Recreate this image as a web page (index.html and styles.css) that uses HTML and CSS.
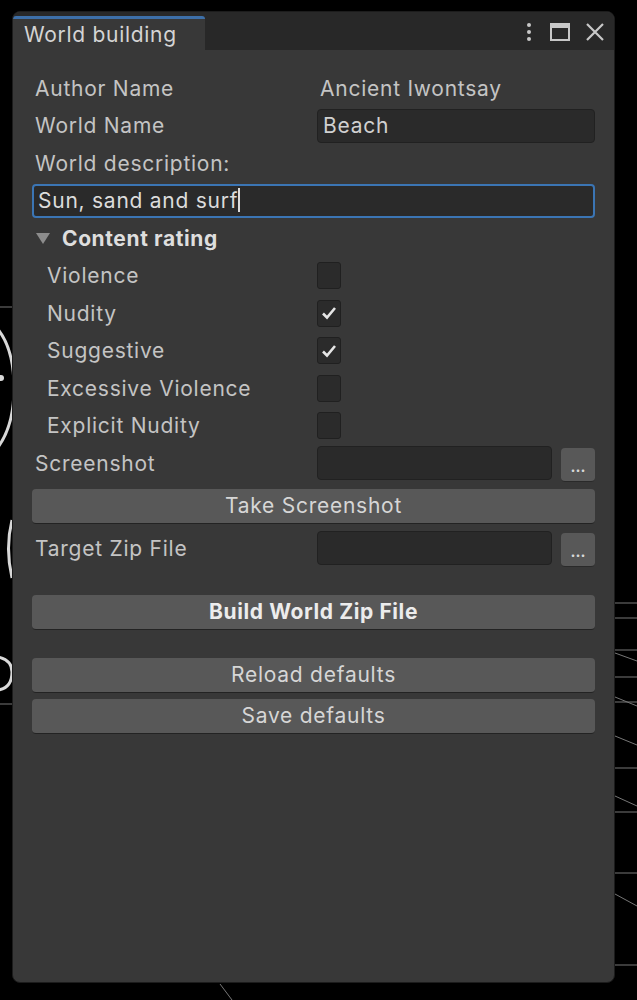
FILE: index.html
```html
<!DOCTYPE html>
<html>
<head>
<meta charset="utf-8">
<link rel="stylesheet" href="styles.css">
</head>
<body>
<svg class="scene" width="637" height="1000" viewBox="0 0 637 1000">
  <g fill="none" stroke="#d8d8d8" stroke-width="3">
    <path d="M-6 325 Q 14 345 14 388 Q 14 430 -6 452"/>
    <path d="M12 520 Q 5 548 12 578"/>
    <path d="M-2 657 Q 12 660 12 672 Q 12 688 -2 690"/>
  </g>
  <circle cx="1" cy="378" r="3" fill="#d8d8d8"/>
  <g stroke="#777" stroke-width="1">
    <line x1="0" y1="307" x2="13" y2="307"/>
    <line x1="0" y1="704" x2="13" y2="704"/>
    <line x1="615" y1="603" x2="637" y2="603"/>
    <line x1="615" y1="618" x2="637" y2="618"/>
    <line x1="615" y1="650" x2="637" y2="650"/>
    <line x1="615" y1="677" x2="637" y2="677"/>
    <line x1="615" y1="702" x2="637" y2="702"/>
    <line x1="615" y1="768" x2="637" y2="768"/>
    <line x1="615" y1="812" x2="637" y2="812"/>
    <line x1="615" y1="873" x2="637" y2="873"/>
    <line x1="615" y1="965" x2="637" y2="965"/>
    <line x1="615" y1="653" x2="637" y2="661"/>
    <line x1="615" y1="697" x2="637" y2="706"/>
    <line x1="615" y1="736" x2="637" y2="745"/>
    <line x1="615" y1="796" x2="637" y2="806"/>
    <line x1="615" y1="894" x2="637" y2="906"/>
    <line x1="220" y1="984" x2="232" y2="1000"/>
  </g>
</svg>

<div class="window">
  <div class="titlebar">
    <div class="tab">World building</div>
    <div class="controls">
      <svg width="8" height="20" viewBox="0 0 8 20"><circle cx="4" cy="3" r="2" fill="#c8c8c8"/><circle cx="4" cy="10" r="2" fill="#c8c8c8"/><circle cx="4" cy="17" r="2" fill="#c8c8c8"/></svg>
      <svg width="20" height="18" viewBox="0 0 20 18"><rect x="1" y="1" width="18" height="16" fill="none" stroke="#c8c8c8" stroke-width="2"/><rect x="1" y="1" width="18" height="4" fill="#c8c8c8"/></svg>
      <svg width="20" height="18" viewBox="0 0 20 18"><path d="M2 1 L18 17 M18 1 L2 17" stroke="#c8c8c8" stroke-width="2.2"/></svg>
    </div>
  </div>

  <div class="content">
    <div class="row"><span class="label">Author Name</span><span class="value">Ancient Iwontsay</span></div>
    <div class="row"><span class="label">World Name</span><div class="field">Beach</div></div>
    <div class="row"><span class="label">World description:</span></div>
    <div class="row"><div class="field wide focused">Sun, sand and surf<span class="caret"></span></div></div>
    <div class="row foldout">
      <svg class="tri" width="14" height="11" viewBox="0 0 14 11"><path d="M0 0 H14 L7 11 Z" fill="#8c8c8c"/></svg>
      <span class="bold">Content rating</span>
    </div>
    <div class="row"><span class="label sub">Violence</span><div class="check"></div></div>
    <div class="row"><span class="label sub">Nudity</span><div class="check"><svg width="16" height="14" viewBox="0 0 16 14"><path d="M2 7.5 L6 11.5 L14 2" fill="none" stroke="#e6e6e6" stroke-width="2.6"/></svg></div></div>
    <div class="row"><span class="label sub">Suggestive</span><div class="check"><svg width="16" height="14" viewBox="0 0 16 14"><path d="M2 7.5 L6 11.5 L14 2" fill="none" stroke="#e6e6e6" stroke-width="2.6"/></svg></div></div>
    <div class="row"><span class="label sub">Excessive Violence</span><div class="check"></div></div>
    <div class="row"><span class="label sub">Explicit Nudity</span><div class="check"></div></div>
    <div class="row"><span class="label">Screenshot</span><div class="field path"></div><div class="dots">...</div></div>
    <div class="button take">Take Screenshot</div>
    <div class="row"><span class="label">Target Zip File</span><div class="field path"></div><div class="dots">...</div></div>
    <div class="button build bold">Build World Zip File</div>
    <div class="button reload">Reload defaults</div>
    <div class="button save">Save defaults</div>
  </div>
</div>
</body>
</html>
```

FILE: styles.css
```css
html, body {
  margin: 0;
  padding: 0;
  background: #000;
  width: 637px;
  height: 1000px;
  overflow: hidden;
  font-family: Inter, "Noto Sans", sans-serif;
}

.scene {
  position: absolute;
  left: 0;
  top: 0;
}

.window {
  position: relative;
  margin: 11px 0 0 12px;
  width: 603px;
  height: 972px;
  background: #383838;
  border-radius: 8px;
  overflow: hidden;
  border: 1px solid #1c1c1c;
  box-sizing: border-box;
}

.titlebar {
  height: 38px;
  background: #282828;
  display: flex;
  align-items: flex-end;
  justify-content: space-between;
}

.tab {
  width: 192px;
  height: 34px;
  background: #383838;
  border-top: 3px solid #3d6fa8;
  border-radius: 3px 3px 0 0;
  color: #d4d4d4;
  font-size: 21px;
  letter-spacing: 0.7px;
  line-height: 32px;
  padding-left: 11px;
  box-sizing: border-box;
}

.controls {
  display: flex;
  align-items: center;
  gap: 15px;
  height: 100%;
  padding-right: 9px;
  padding-top: 2px;
  box-sizing: border-box;
}
.controls svg:first-child { margin-right: 2px; }

.content {
  display: flex;
  flex-direction: column;
  gap: 3.5px;
  padding: 21px 19px 0 19px;
  color: #c4c4c4;
  font-size: 21px;
  letter-spacing: 0.75px;
}

.row {
  height: 34px;
  display: flex;
  align-items: center;
}

.label {
  width: 285px;
  flex: none;
  padding-left: 3px;
  box-sizing: border-box;
}
.label.sub { padding-left: 15px; }

.value { padding-left: 3px; }

.field {
  flex: 1;
  height: 34px;
  box-sizing: border-box;
  background: #2a2a2a;
  border: 1px solid #212121;
  border-radius: 4px;
  padding-left: 5px;
  line-height: 32px;
  color: #d0d0d0;
}
.field.focused {
  border: 2px solid #3b75b4;
  line-height: 30px;
  color: #dcdcdc;
  padding-left: 4px;
}
.caret {
  display: inline-block;
  width: 1.5px;
  height: 24px;
  background: #dcdcdc;
  vertical-align: middle;
  margin-top: -4px;
}
.field.path { flex: none; width: 235px; }

.dots {
  width: 34px;
  height: 34px;
  margin-left: 9px;
  margin-top: 4px;
  background: #585858;
  border-radius: 4px;
  border-bottom: 1px solid #2a2a2a;
  box-sizing: border-box;
  font-size: 15px;
  color: #d8d8d8;
  text-align: center;
  line-height: 38px;
  font-weight: bold;
  letter-spacing: 0;
}

.foldout { padding-left: 4px; }
.tri { margin-right: 12px; margin-top: 1px; }
.bold { font-weight: 700; color: #dedede; letter-spacing: 0.6px; }

.check {
  width: 24px;
  height: 27px;
  box-sizing: border-box;
  background: #2b2b2b;
  border: 1px solid #202020;
  border-radius: 3px;
  display: flex;
  align-items: center;
  justify-content: center;
}

.button {
  height: 35px;
  box-sizing: border-box;
  background: #585858;
  border-radius: 4px;
  border-bottom: 1.5px solid #232323;
  text-align: center;
  line-height: 34px;
  color: #d6d6d6;
}
.button.bold { color: #ececec; }
.take { margin: 5px 0 4px; }
.build { margin-top: 26px; }
.reload { margin-top: 25px; }
.save { margin-top: 2.5px; }
```
